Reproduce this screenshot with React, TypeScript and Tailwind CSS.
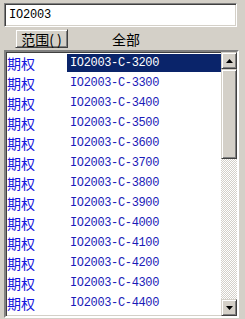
const codes = [
  "3200", "3300", "3400", "3500", "3600", "3700", "3800",
  "3900", "4000", "4100", "4200", "4300", "4400",
];

const raised =
  "border border-t-[#d4d0c8] border-l-[#d4d0c8] border-b-[#404040] border-r-[#404040] shadow-[inset_1px_1px_#ffffff,inset_-1px_-1px_#808080]";
const sunken =
  "border border-t-[#808080] border-l-[#808080] border-b-white border-r-white shadow-[inset_1px_1px_#404040,inset_-1px_-1px_#d4d0c8]";

function ScrollButton({ up }: { up?: boolean }) {
  return (
    <div className={`h-[17px] w-[16px] bg-[#d4d0c8] flex items-center justify-center ${raised}`}>
      <svg width="7" height="4" viewBox="0 0 7 4">
        {up ? <path d="M3.5 0L7 4H0z" fill="#000" /> : <path d="M0 0h7L3.5 4z" fill="#000" />}
      </svg>
    </div>
  );
}

export default function App() {
  return (
    <div className="w-[245px] h-[319px] bg-[#d4d0c8] pt-[3px] px-[4px] flex flex-col overflow-hidden">
      {/* Search box */}
      <div className={`h-[24px] w-[233px] bg-white flex items-center pl-[4px] ${sunken}`}>
        <span className="text-[12px] tracking-[-0.2px] text-black font-['Liberation_Mono',monospace]">IO2003</span>
      </div>

      {/* Filter row */}
      <div className="flex items-center mt-[2px] h-[19px]">
        <button
          className={`ml-[11px] h-[19px] w-[53px] px-0 bg-[#d4d0c8] flex items-center justify-center text-[14px] text-black font-['Noto_Sans_CJK_SC',sans-serif] leading-none whitespace-pre ${raised}`}
        >
          范围( )
        </button>
        <span className="ml-[44px] text-[14px] text-black font-['Noto_Sans_CJK_SC',sans-serif] leading-none">
          全部
        </span>
      </div>

      {/* List */}
      <div className={`mt-[2px] w-[235px] h-[268px] bg-white flex ${sunken} border-[2px]`}>
        <div className="flex-1 pt-[1px] overflow-hidden">
          {codes.map((c, i) => (
            <div key={c} className="h-[20px] flex items-center">
              <div className="w-[61px] pl-[1px] text-[14px] text-[#1414dc] font-['Noto_Sans_CJK_SC',sans-serif] leading-none">
                期权
              </div>
              <div
                className={`flex-1 h-[18px] flex items-center pl-[3px] text-[12px] tracking-[-0.35px] font-['Liberation_Mono',monospace] ${
                  i === 0 ? "bg-[#0a246a] text-white" : "text-[#1a1ab8]"
                }`}
              >
                IO2003-C-{c}
              </div>
            </div>
          ))}
        </div>

        {/* Scrollbar */}
        <div className="w-[16px] flex flex-col">
          <ScrollButton up />
          <div className={`h-[90px] bg-[#d4d0c8] ${raised}`} />
          <div className="flex-1 bg-[repeating-conic-gradient(#d4d0c8_0_25%,#ffffff_0_50%)] bg-[length:2px_2px]" />
          <ScrollButton />
        </div>
      </div>
    </div>
  );
}
